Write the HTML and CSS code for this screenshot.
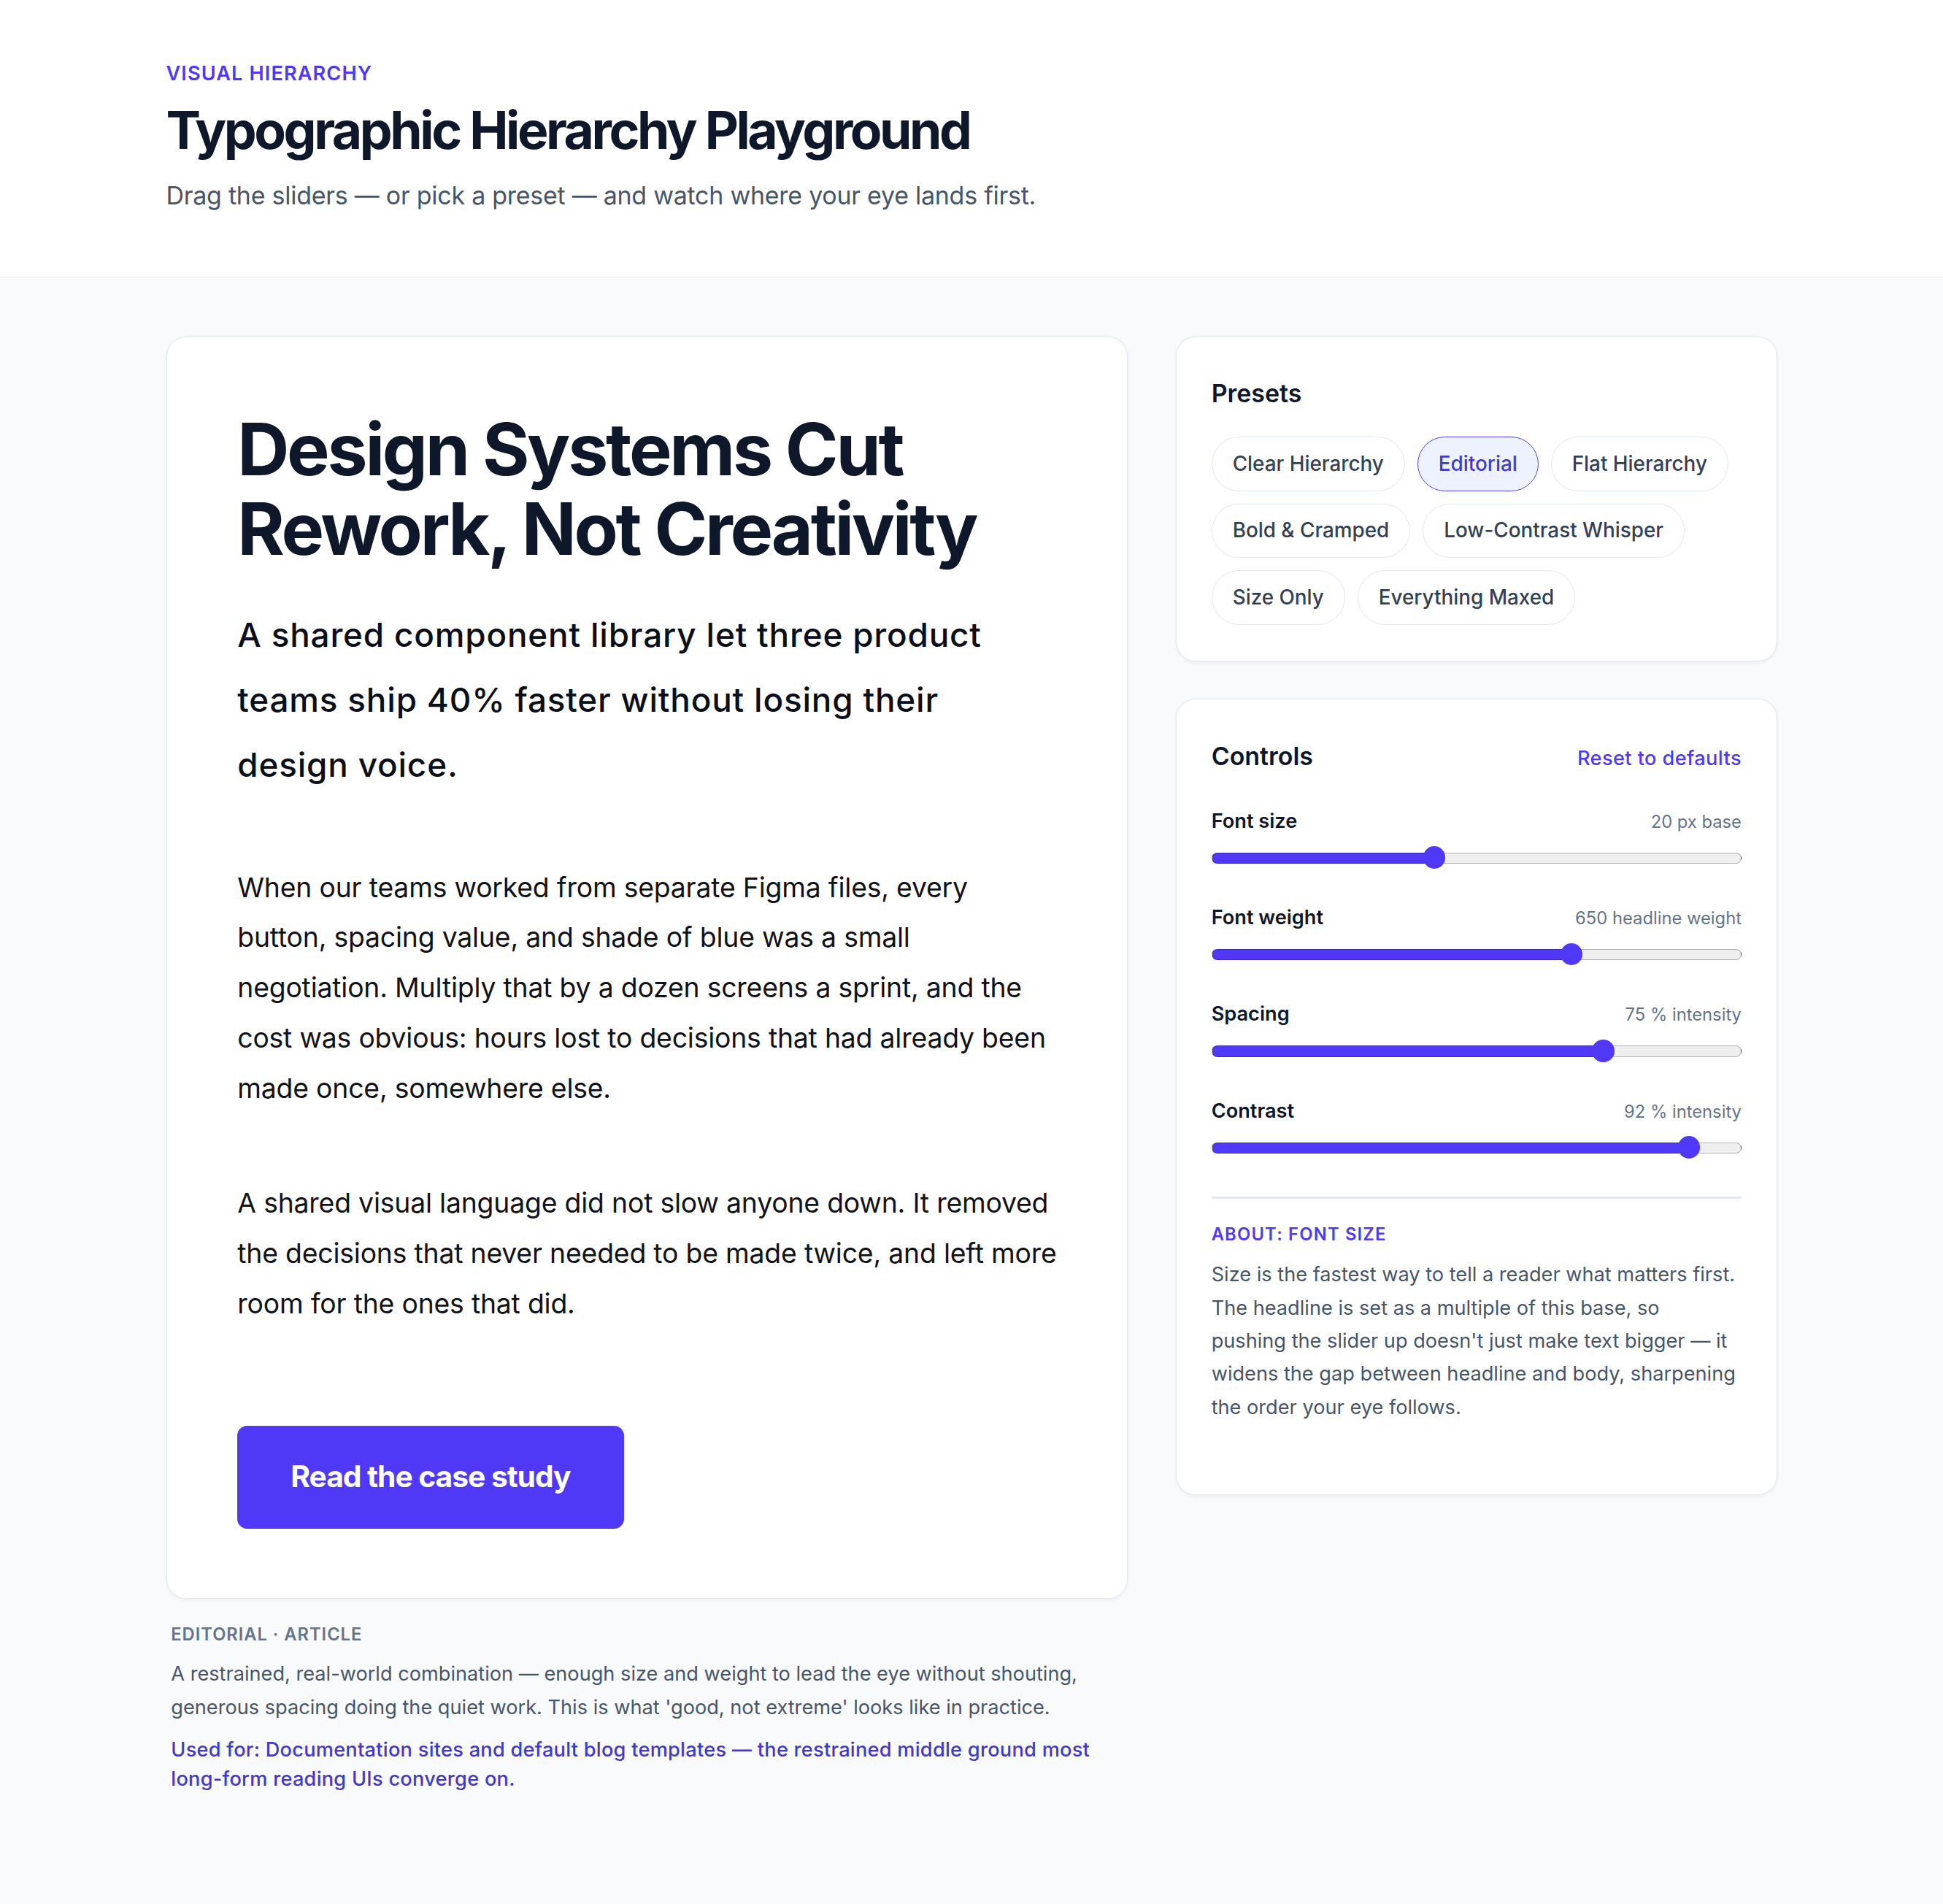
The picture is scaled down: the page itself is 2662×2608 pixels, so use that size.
FILE: index.html
```html
<!DOCTYPE html>
<html lang="en">
<head>
    <meta charset="UTF-8">
    <meta name="viewport" content="width=device-width, initial-scale=1.0">
    <title>Typographic Hierarchy Playground</title>
    <link rel="stylesheet" href="styles.css">
</head>
<body>

    <header class="page-header">
        <div class="wrap">
            <p class="eyebrow">Visual Hierarchy</p>
            <h1 class="page-title">Typographic Hierarchy Playground</h1>
            <p class="page-sub">Drag the sliders — or pick a preset — and watch where your eye lands first.</p>
        </div>
    </header>

    <main class="wrap layout">
        <section class="preview-col">
            <article class="preview-card">
                <h2 class="demo-headline">Design Systems Cut Rework, Not Creativity</h2>
                <p class="demo-sub">A shared component library let three product teams ship 40% faster without losing their design voice.</p>
                <p class="demo-body">When our teams worked from separate Figma files, every button, spacing value, and shade of blue was a small negotiation. Multiply that by a dozen screens a sprint, and the cost was obvious: hours lost to decisions that had already been made once, somewhere else.</p>
                <p class="demo-body">A shared visual language did not slow anyone down. It removed the decisions that never needed to be made twice, and left more room for the ones that did.</p>
                <a href="#" class="demo-btn">Read the case study</a>
            </article>

            <div class="preset-note">
                <p class="note-label">Editorial · Article</p>
                <p class="note-desc">A restrained, real-world combination — enough size and weight to lead the eye without shouting, generous spacing doing the quiet work. This is what 'good, not extreme' looks like in practice.</p>
                <p class="note-use">Used for: Documentation sites and default blog templates — the restrained middle ground most long-form reading UIs converge on.</p>
            </div>
        </section>

        <aside class="side-col">
            <div class="panel">
                <h3 class="panel-title">Presets</h3>
                <div class="chips">
                    <button class="chip">Clear Hierarchy</button>
                    <button class="chip active">Editorial</button>
                    <button class="chip">Flat Hierarchy</button>
                    <button class="chip">Bold &amp; Cramped</button>
                    <button class="chip">Low-Contrast Whisper</button>
                    <button class="chip">Size Only</button>
                    <button class="chip">Everything Maxed</button>
                </div>
            </div>

            <div class="panel controls">
                <div class="panel-head">
                    <h3 class="panel-title">Controls</h3>
                    <a href="#" class="reset-link">Reset to defaults</a>
                </div>

                <div class="control">
                    <div class="control-row">
                        <label for="font-size">Font size</label>
                        <span class="control-value">20 px base</span>
                    </div>
                    <input type="range" id="font-size" class="range" min="10" max="34" value="20" style="--p: 0.4167">
                </div>

                <div class="control">
                    <div class="control-row">
                        <label for="font-weight">Font weight</label>
                        <span class="control-value">650 headline weight</span>
                    </div>
                    <input type="range" id="font-weight" class="range" min="100" max="900" value="650" style="--p: 0.6875">
                </div>

                <div class="control">
                    <div class="control-row">
                        <label for="spacing">Spacing</label>
                        <span class="control-value">75 % intensity</span>
                    </div>
                    <input type="range" id="spacing" class="range" min="0" max="100" value="75" style="--p: 0.75">
                </div>

                <div class="control">
                    <div class="control-row">
                        <label for="contrast">Contrast</label>
                        <span class="control-value">92 % intensity</span>
                    </div>
                    <input type="range" id="contrast" class="range" min="0" max="100" value="92" style="--p: 0.92">
                </div>

                <div class="about">
                    <p class="about-label">About: Font size</p>
                    <p class="about-text">Size is the fastest way to tell a reader what matters first. The headline is set as a multiple of this base, so pushing the slider up doesn't just make text bigger — it widens the gap between headline and body, sharpening the order your eye follows.</p>
                </div>
            </div>
        </aside>
    </main>

</body>
</html>
```

FILE: styles.css
```css
/* Base */
html {
    zoom: 1.6977;
}

body {
    margin: 0;
    font-family: Inter, "Noto Sans", Arial, sans-serif;
    background-color: #f8fafc;
    color: #0f172a;
}

p, h1, h2, h3 {
    margin: 0;
}

.wrap {
    max-width: 1300px;
    margin: 0 auto;
}

/* Page header */
.page-header {
    background-color: #fff;
    border-bottom: 1px solid #e2e8f0;
    padding: 48px 0 51px;
}

.eyebrow {
    font-size: 16px;
    line-height: 24px;
    font-weight: 600;
    letter-spacing: 0.04em;
    text-transform: uppercase;
    color: #4f39f6;
}

.page-title {
    margin-top: 8px;
    font-size: 42px;
    line-height: 50px;
    font-weight: 700;
    letter-spacing: -0.048em;
    color: #0f172a;
}

.page-sub {
    margin-top: 14px;
    font-size: 20px;
    line-height: 28px;
    letter-spacing: -0.007em;
    color: #475569;
}

/* Layout */
.layout {
    display: grid;
    grid-template-columns: 1fr 485px;
    gap: 39px;
    align-items: start;
    padding: 48px 0 80px;
}

/* Preview card */
.preview-card {
    background-color: #fff;
    border: 1px solid #e2e8f0;
    border-radius: 16px;
    box-shadow: 0 1px 3px rgba(15, 23, 42, 0.06);
    padding: 58px 55px 56px 57px;
}

.demo-headline {
    font-size: 58px;
    line-height: 64.4px;
    font-weight: 650;
    letter-spacing: -0.033em;
    color: #0f172a;
}

.demo-sub {
    max-width: 625px;
    margin-top: 27px;
    font-size: 27px;
    line-height: 52.5px;
    font-weight: 500;
    letter-spacing: 0.018em;
    color: #0b0f19;
}

.demo-body {
    margin-top: 52.5px;
    font-size: 22px;
    line-height: 40.5px;
    letter-spacing: -0.005em;
    color: #111318;
}

.demo-btn {
    display: inline-block;
    margin-top: 78px;
    padding: 26px 43px;
    background-color: #4f39f6;
    color: #fff;
    font-size: 24px;
    line-height: 31px;
    font-weight: 700;
    letter-spacing: -0.025em;
    text-decoration: none;
    border-radius: 8px;
}

/* Preset note under the card */
.preset-note {
    padding: 19px 4px 0;
}

.note-label {
    font-size: 14px;
    line-height: 20px;
    font-weight: 600;
    letter-spacing: 0.04em;
    text-transform: uppercase;
    color: #64748b;
}

.note-desc {
    margin-top: 8px;
    font-size: 16px;
    line-height: 27px;
    color: #475569;
}

.note-use {
    margin-top: 9px;
    font-size: 16px;
    line-height: 24px;
    font-weight: 500;
    letter-spacing: 0.01em;
    color: #4338ca;
}

/* Side panels */
.side-col {
    display: flex;
    flex-direction: column;
    gap: 30px;
}

.panel {
    background-color: #fff;
    border: 1px solid #e2e8f0;
    border-radius: 16px;
    box-shadow: 0 1px 3px rgba(15, 23, 42, 0.06);
    padding: 31px 28px 29px;
}

.panel-title {
    font-size: 20px;
    line-height: 28px;
    font-weight: 600;
    color: #0f172a;
}

.chips {
    display: flex;
    flex-wrap: wrap;
    gap: 10px;
    margin-top: 21px;
}

.chip {
    height: 44px;
    font-family: inherit;
    font-size: 16.4px;
    line-height: 22px;
    font-weight: 500;
    color: #334155;
    background-color: #fff;
    border: 1px solid #e2e8f0;
    border-radius: 999px;
    padding: 0 16.5px;
    cursor: pointer;
}

.chip.active {
    background-color: #eef2ff;
    border-color: #4f46e5;
    color: #4338ca;
}

/* Controls */
.controls {
    padding-top: 32px;
    padding-bottom: 57px;
}

.panel-head {
    display: flex;
    justify-content: space-between;
    align-items: baseline;
    margin-bottom: 27px;
}

.reset-link {
    font-size: 16px;
    font-weight: 500;
    letter-spacing: 0.015em;
    color: #4f39f6;
    text-decoration: none;
}

.control + .control {
    margin-top: 28px;
}

.control-row {
    display: flex;
    justify-content: space-between;
    align-items: baseline;
    margin-bottom: 10px;
}

.control-row label {
    font-size: 16px;
    line-height: 22px;
    font-weight: 600;
    color: #0f172a;
}

.control-value {
    font-size: 14px;
    color: #64748b;
}

.range {
    -webkit-appearance: none;
    appearance: none;
    display: block;
    width: 100%;
    height: 18px;
    margin: 0;
    background: transparent;
}

.range::-webkit-slider-runnable-track {
    height: 9px;
    box-sizing: border-box;
    border: 1px solid rgba(0, 0, 0, 0.25);
    border-radius: 5px;
    background: linear-gradient(to right,
        #4f39f6 0,
        #4f39f6 calc(9px + (100% - 18px) * var(--p)),
        #efefef calc(9px + (100% - 18px) * var(--p)));
}

.range::-webkit-slider-thumb {
    -webkit-appearance: none;
    appearance: none;
    width: 18px;
    height: 18px;
    margin-top: -5.5px;
    border: none;
    border-radius: 50%;
    background-color: #4f39f6;
}

.about {
    margin-top: 30px;
    padding-top: 19px;
    border-top: 2px solid #e2e8f0;
}

.about-label {
    font-size: 14px;
    line-height: 20px;
    font-weight: 600;
    letter-spacing: 0.05em;
    text-transform: uppercase;
    color: #4f39f6;
}

.about-text {
    margin-top: 9px;
    padding-right: 4px;
    font-size: 16px;
    line-height: 26.75px;
    color: #475569;
}
```
